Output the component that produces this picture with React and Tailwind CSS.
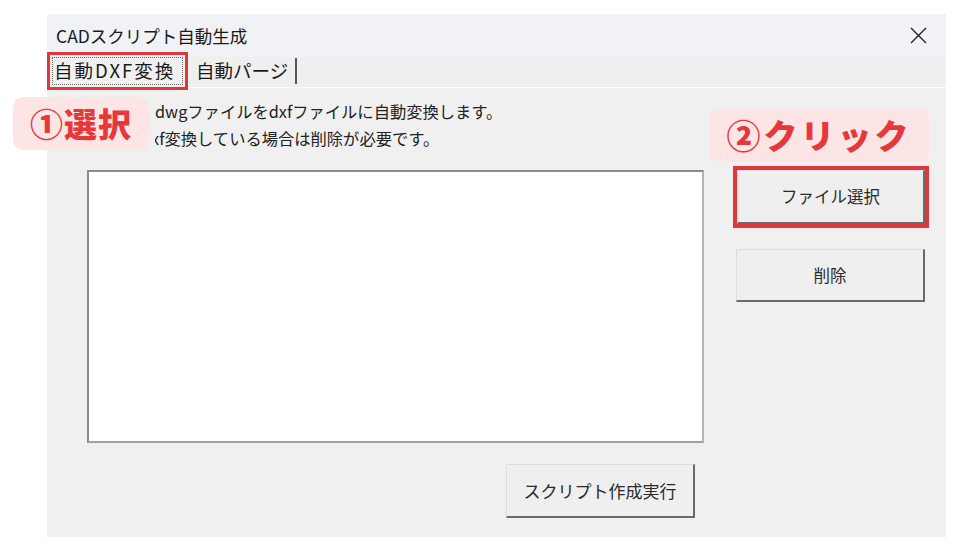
const JP = { fontFamily: '"Noto Sans CJK JP", "Noto Sans", sans-serif' }

function WinButton({ children, className = '' }) {
  return (
    <div
      className={`flex items-center justify-center bg-[#efefef] border-t border-l border-t-[#dcdcdc] border-l-[#dcdcdc] border-r-2 border-b-2 border-r-[#6a6a6a] border-b-[#6a6a6a] text-[16.5px] text-[#2a2a2a] ${className}`}
    >
      {children}
    </div>
  )
}

function CloseIcon() {
  return (
    <svg width="17" height="17" viewBox="0 0 17 17" className="text-[#222]">
      <path d="M1 1 L16 16 M16 1 L1 16" stroke="currentColor" strokeWidth="1.4" fill="none" />
    </svg>
  )
}

export default function App() {
  return (
    <div className="relative w-[955px] h-[547px] bg-white overflow-hidden pl-[47px] pt-[14px]" style={JP}>
      <div className="w-[899px] h-[523px] flex flex-col">
        {/* Title bar */}
        <div className="h-[43px] bg-[#f0f2f6] flex items-center justify-between pl-[9px] pr-[19px]">
          <span className="text-[17.5px] text-[#1a1a1a] leading-none">CADスクリプト自動生成</span>
          <CloseIcon />
        </div>

        {/* Tabs */}
        <div className="h-[30px] bg-[#efefef] flex items-end">
          <div className="h-[38px] w-[141px] border-[3px] border-[#e0373b] bg-[#f0f0f0] p-[2px] -mb-[3px] z-10">
            <div className="h-full border border-dotted border-[#666] flex items-center pl-[1px] text-[18.5px] tracking-[2px] text-[#1a1a1a] whitespace-nowrap">
              自動DXF変換
            </div>
          </div>
          <div className="h-[26px] ml-[2px] w-[107px] flex items-center pl-[6px] text-[18.5px] text-[#1a1a1a] border-r-2 border-r-[#555] mb-[3px] whitespace-nowrap">
            自動パージ
          </div>
        </div>

        {/* Content */}
        <div className="flex-1 bg-[#f0f0f0] border-t border-white pl-[40px] pt-[10px] flex flex-col">
          <div className="ml-[68px] h-[72px] text-[16.3px] leading-[27px] text-[#222]">
            <div>dwgファイルをdxfファイルに自動変換します。</div>
            <div className="overflow-hidden w-[380px]">
              <div className="-ml-[14px] whitespace-nowrap">dxf変換している場合は削除が必要です。</div>
            </div>
          </div>

          <div className="flex items-start">
            <div className="w-[617px] h-[273px] bg-white border-2 border-t-[#8c8c8c] border-l-[#8c8c8c] border-r-[#b4b4b4] border-b-[#a0a0a0]" />
            <div className="ml-[29px] -mt-[4px] flex flex-col">
              <div className="w-[196px] h-[62px] border-4 border-[#e0373b] p-0">
                <WinButton className="w-full h-full">ファイル選択</WinButton>
              </div>
              <WinButton className="mt-[21px] ml-[3px] w-[189px] h-[53px]">削除</WinButton>
            </div>
          </div>

          <WinButton className="ml-[419px] mt-[21px] w-[189px] h-[54px] text-[17px]">スクリプト作成実行</WinButton>
        </div>
      </div>

      {/* Annotations */}
      <div className="absolute left-[13px] top-[97px] w-[136px] h-[53px] rounded-[10px] bg-[#fde5e5] flex items-center justify-center">
        <span className="text-[33px] font-black text-[#e5383b] leading-none tracking-[1px] whitespace-nowrap">①選択</span>
      </div>
      <div className="absolute left-[709px] top-[109px] w-[220px] h-[52px] rounded-[6px] bg-[#fde5e5] flex items-center justify-center">
        <span className="text-[34px] font-black text-[#e5383b] leading-none tracking-[3px] whitespace-nowrap">②クリック</span>
      </div>
    </div>
  )
}
